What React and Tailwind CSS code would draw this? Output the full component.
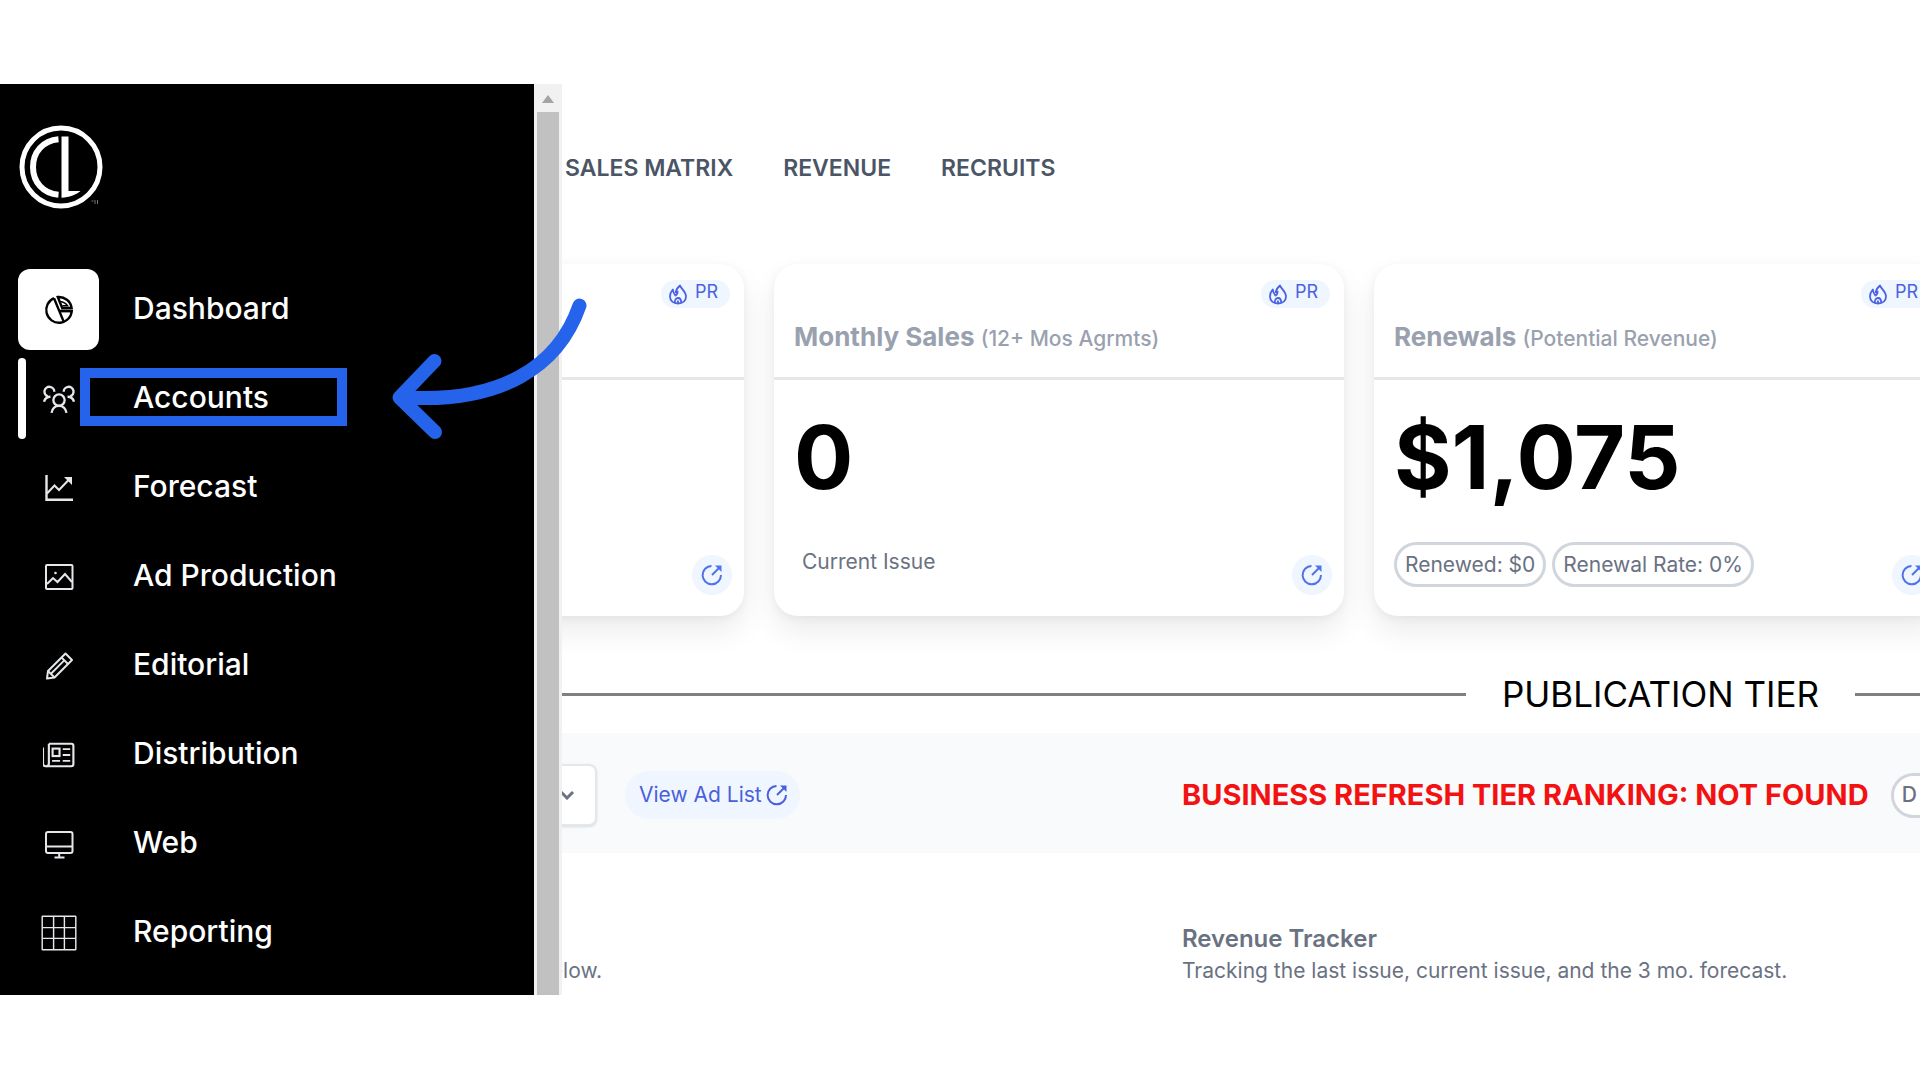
import React from "react";

const navItems = [
  { label: "Dashboard", icon: PieIcon, active: true },
  { label: "Accounts", icon: PeopleIcon, marked: true },
  { label: "Forecast", icon: ChartIcon },
  { label: "Ad Production", icon: ImageIcon },
  { label: "Editorial", icon: PencilIcon },
  { label: "Distribution", icon: NewsIcon },
  { label: "Web", icon: DesktopIcon },
  { label: "Reporting", icon: GridIcon },
];

const tabs = ["SALES MATRIX", "REVENUE", "RECRUITS"];

function Icon({ children, className = "size-[30px]", strokeWidth = 2 }) {
  return (
    <svg
      viewBox="0 0 30 30"
      className={className}
      fill="none"
      stroke="currentColor"
      strokeWidth={strokeWidth}
      aria-hidden="true"
    >
      {children}
    </svg>
  );
}

function PieIcon() {
  return (
    <Icon strokeWidth={2.400}>
      <path d="M10 3.2A12.8 12.8 0 1 0 27.8 16H16" />
      <path d="M10 3.2L20 27.4" />
      <path d="M13.8 2A12.8 12.8 0 0 1 27.6 13H18.2z" />
      <path d="M16 6.5c3.4.4 6 2 7.6 4.2h-5.2" strokeWidth="1.4" />
      <path d="M17 16h10.6" />
    </Icon>
  );
}

function PeopleIcon() {
  return (
    <Icon className="size-8" strokeWidth={2.200}>
      <circle cx="15" cy="16" r="5.3" />
      <path d="M8 28c.8-4 3-6.500 7-6.500s6.200 2.500 7 6.500" />
      <path d="M10.600 8.200A4.600 4.600 0 1 0 4.500 12.500" />
      <path d="M19.400 8.200a4.600 4.600 0 1 1 6.100 4.300" />
      <path d="M1 17.500c.8-3 2.200-4.600 6-4.600M29 17.500c-.8-3-2.200-4.600-6-4.600" />
    </Icon>
  );
}

function ChartIcon() {
  return (
    <Icon>
      <path d="M2.500 2v24.800H29" strokeWidth="2.400" />
      <path d="M3 20.500l7.500-8 4.500 4.500L25.500 6" />
      <path d="M20 4h8v8z" fill="currentColor" stroke="none" />
    </Icon>
  );
}

function ImageIcon() {
  return (
    <Icon>
      <rect x="2" y="3" width="26.500" height="24" rx="1" />
      <path d="M3 22l6-6 4.500 4 7.500-8 7 8" />
      <circle cx="11.500" cy="11" r="1.300" fill="currentColor" stroke="none" />
    </Icon>
  );
}

function PencilIcon() {
  return (
    <Icon>
      <path d="M3 27.500l1-7.500L21.500 2.500l6.500 6.500L10.500 26.500z" strokeLinejoin="round" />
      <path d="M17.500 6.500l6.500 6.500M4 20l6.500 6.500M7.200 22.500L20.500 9.200" strokeWidth="1.800" />
    </Icon>
  );
}

function NewsIcon() {
  return (
    <Icon className="size-8">
      <path d="M5.500 4.500h21q2 0 2 2v17q0 2-2 2h-24q-2.500 0-2.500-2.500V8" />
      <path d="M5.500 4.500V23q0 2.500-2.500 2.500" />
      <rect x="9" y="9" width="6.500" height="7" />
      <path d="M18.500 9.500h7M18.500 15h7M18.500 20.500h7M8.500 20.500h7.500" strokeWidth="1.700" />
    </Icon>
  );
}

function DesktopIcon() {
  return (
    <Icon>
      <rect x="2" y="3" width="26.500" height="21" rx="2" />
      <path d="M2 17.500h26.500" />
      <path d="M15.200 24v4.500M10.500 28.500h10" />
    </Icon>
  );
}

function GridIcon() {
  return (
    <Icon className="size-9" strokeWidth={1.200}>
      <rect x="1" y="1" width="28" height="28" rx=".5" />
      <path d="M10.500 1v28M19.500 1v28M1 10.500h28M1 19.500h28" />
    </Icon>
  );
}

function FlameIcon() {
  return (
    <svg
      viewBox="0 0 18 21"
      className="mt-1 h-[21px] w-[18px]"
      fill="none"
      stroke="currentColor"
      strokeWidth="1.800"
      strokeLinejoin="round"
      aria-hidden="true"
    >
      <path d="M6.500 9C7 6 8.500 3.500 11 1.500c.8 3 6 6 6 11 0 4.200-3.300 7-8 7s-8-2.800-8-7C1 10 2 7.500 3.800 5.500 4 7.500 4.500 9.500 6.500 11.500c1.800-1 2.300-2.500 2-4.500" />
      <path d="M5.800 18.800c0-3 1.200-4.800 3.200-4.800s3.200 1.800 3.200 4.800M9 16.500v3" />
    </svg>
  );
}

function OpenIcon() {
  return (
    <svg
      viewBox="0 0 22 22"
      className="size-[22px]"
      fill="none"
      stroke="currentColor"
      strokeWidth="2"
      aria-hidden="true"
    >
      <path d="M10.500 1.900A9.200 9.200 0 1 0 20 11" />
      <path d="M11 11L19 3" />
      <path d="M14 1.500h6.500V8z" fill="currentColor" stroke="none" />
    </svg>
  );
}

function Logo() {
  return (
    <svg viewBox="0 0 84 84" className="ml-px size-[84px]" role="img" aria-label="CL">
      <circle cx="42" cy="42" r="39" fill="none" stroke="#fff" strokeWidth="5" />
      <path
        d="M39.500 14.200C24 15.500 14 27 14 42s10 26.500 25.500 27.800"
        fill="none"
        stroke="#fff"
        strokeWidth="6"
      />
      <path d="M42.500 11.500h7V66h12c-5 4-11 6.300-19 6.700z" fill="#fff" />
      <path d="M72.500 76h2M76 75v4M78.500 75v4" stroke="#777" strokeWidth="1" />
    </svg>
  );
}

function NavItem({ item }) {
  const ItemIcon = item.icon;
  return (
    <li className="relative h-[81px]">
      {item.marked && <span className="absolute inset-y-0 left-0 w-2 rounded-full bg-white" />}
      <a href="#" className="flex h-full items-center gap-[34px] text-[30px] font-medium text-white">
        <span
          className={
            item.active
              ? "flex size-[81px] items-center justify-center rounded-xl bg-white text-black"
              : "flex size-[81px] items-center justify-center text-gray-200"
          }
        >
          <ItemIcon />
        </span>
        <span className="pb-0.5">{item.label}</span>
      </a>
      {item.marked && (
        <span className="absolute top-2.5 left-[62px] h-[58px] w-[267px] border-10 border-[#2563eb]" />
      )}
    </li>
  );
}

function Sidebar() {
  return (
    <aside className="flex w-[562px] shrink-0 bg-black">
      <div className="flex-1 px-[18px] pt-[41px] pb-[22px]">
        <Logo />
        <ul className="mt-[60px] flex flex-col gap-2">
          {navItems.map((item) => (
            <NavItem key={item.label} item={item} />
          ))}
        </ul>
      </div>
      <div className="flex w-7 flex-col items-center bg-[#f1f1f1]">
        <svg viewBox="0 0 28 28" className="size-7" aria-hidden="true">
          <path d="M8 19h12l-6-8z" fill="#a3a3a3" />
        </svg>
        <div className="w-[22px] flex-1 bg-[#c1c1c1]" />
      </div>
    </aside>
  );
}

function Card({ title, note, value, children }) {
  return (
    <section className="flex h-[352px] flex-col rounded-3xl bg-white shadow-[0_15px_30px_rgba(0,0,0,0.08),0_2px_10px_rgba(0,0,0,0.05)]">
      <div className="flex h-[116px] flex-col border-b-3 border-gray-200 pt-4 pr-3.5 pl-5">
        <button className="flex h-7 items-start gap-2 self-end rounded-full bg-[#eff6ff] pr-3 pl-2 text-[18px] leading-6 text-[#4a62e0]">
          <FlameIcon />
          PR
        </button>
        <h2 className="mt-[13px] text-[26px] leading-8 font-bold text-gray-400">
          {title} <span className="text-[21px] font-medium">{note}</span>
        </h2>
      </div>
      <div className="h-[122px] px-5 pt-[31px]">
        <p className="text-[88px] leading-[92px] font-bold text-black">{value}</p>
      </div>
      <div className="flex flex-1 justify-between pt-10 pr-3 pl-5 text-[21px] text-gray-500">
        <div className="flex items-start gap-1.5">{children}</div>
        <button
          aria-label="Open"
          className="mt-[13px] flex size-10 items-center justify-center rounded-full bg-[#eff6ff] text-[#4f73e8]"
        >
          <OpenIcon />
        </button>
      </div>
    </section>
  );
}

function Pill({ children }) {
  return (
    <span className="flex h-[45px] items-center rounded-full border-3 border-gray-300 bg-white px-2 whitespace-nowrap">
      {children}
    </span>
  );
}

function ArrowNote() {
  return (
    <svg
      viewBox="0 0 200 150"
      className="pointer-events-none absolute top-[206px] left-[390px] h-[150px] w-[200px]"
      fill="none"
      stroke="#2563eb"
      strokeWidth="14"
      strokeLinecap="round"
      strokeLinejoin="round"
      aria-hidden="true"
    >
      <path d="M189.500 15.500C168 78 109 113 16 107.500" />
      <path d="M44.500 71L9.500 107.500L45 142" />
    </svg>
  );
}

export default function App() {
  return (
    <div className="min-h-screen bg-white py-[84px] font-[Inter,sans-serif]">
      <div className="relative flex">
        <Sidebar />
        <main className="min-w-0 flex-1 overflow-hidden">
          <nav className="flex gap-[50px] pt-[68px] pl-[3px] text-[23px] leading-8 font-semibold text-gray-600">
            {tabs.map((tab) => (
              <a key={tab} href="#">
                {tab}
              </a>
            ))}
          </nav>

          <div className="mt-20 -mr-6 ml-[-388px] grid grid-cols-3 gap-[30px]">
            <Card />
            <Card title="Monthly Sales" note="(12+ Mos Agrmts)" value="0">
              <span className="pt-1 pl-2">Current Issue</span>
            </Card>
            <Card title="Renewals" note="(Potential Revenue)" value="$1,075">
              <Pill>Renewed: $0</Pill>
              <Pill>Renewal Rate: 0%</Pill>
            </Card>
          </div>

          <div className="mt-[57px] flex items-center gap-9">
            <div className="h-[3px] flex-1 bg-[#808080]" />
            <h1 className="text-[35px] leading-[42px] text-black">PUBLICATION TIER</h1>
            <div className="h-[3px] w-[65px] bg-[#808080]" />
          </div>

          <div className="mt-[18px] flex h-[120px] items-center bg-slate-50 pt-1">
            <div className="flex w-[620px] shrink-0 items-center gap-7">
              <div className="relative -ml-10">
                <select
                  aria-label="Issue"
                  className="h-[62px] w-[75px] appearance-none rounded-lg border-2 border-gray-200 bg-white shadow-sm"
                />
                <svg
                  viewBox="0 0 16 10"
                  className="pointer-events-none absolute top-[26px] right-[22px] h-2.5 w-4"
                  fill="none"
                  stroke="#6b7280"
                  strokeWidth="3"
                  aria-hidden="true"
                >
                  <path d="M2 2l6 6 6-6" />
                </svg>
              </div>
              <a
                href="#"
                className="flex h-12 items-center gap-1 rounded-full bg-[#eff6ff] pr-3 pl-3.5 text-[21px] text-[#4a5fdc]"
              >
                View Ad List
                <OpenIcon />
              </a>
            </div>
            <div className="flex items-center gap-[22px] text-[21px] font-medium text-gray-500">
              <strong className="text-[29px] font-bold whitespace-nowrap text-[#f31212]">
                BUSINESS REFRESH TIER RANKING: NOT FOUND
              </strong>
              <Pill>
                <span className="pr-10">D</span>
              </Pill>
            </div>
          </div>

          <div className="flex pt-[70px] text-[21px] leading-8 text-gray-500">
            <p className="w-[620px] shrink-0 pt-8">
              <span className="-ml-6">below.</span>
            </p>
            <div>
              <h2 className="text-[24px] font-semibold">Revenue Tracker</h2>
              <p>Tracking the last issue, current issue, and the 3 mo. forecast.</p>
            </div>
          </div>
        </main>
        <ArrowNote />
      </div>
    </div>
  );
}
